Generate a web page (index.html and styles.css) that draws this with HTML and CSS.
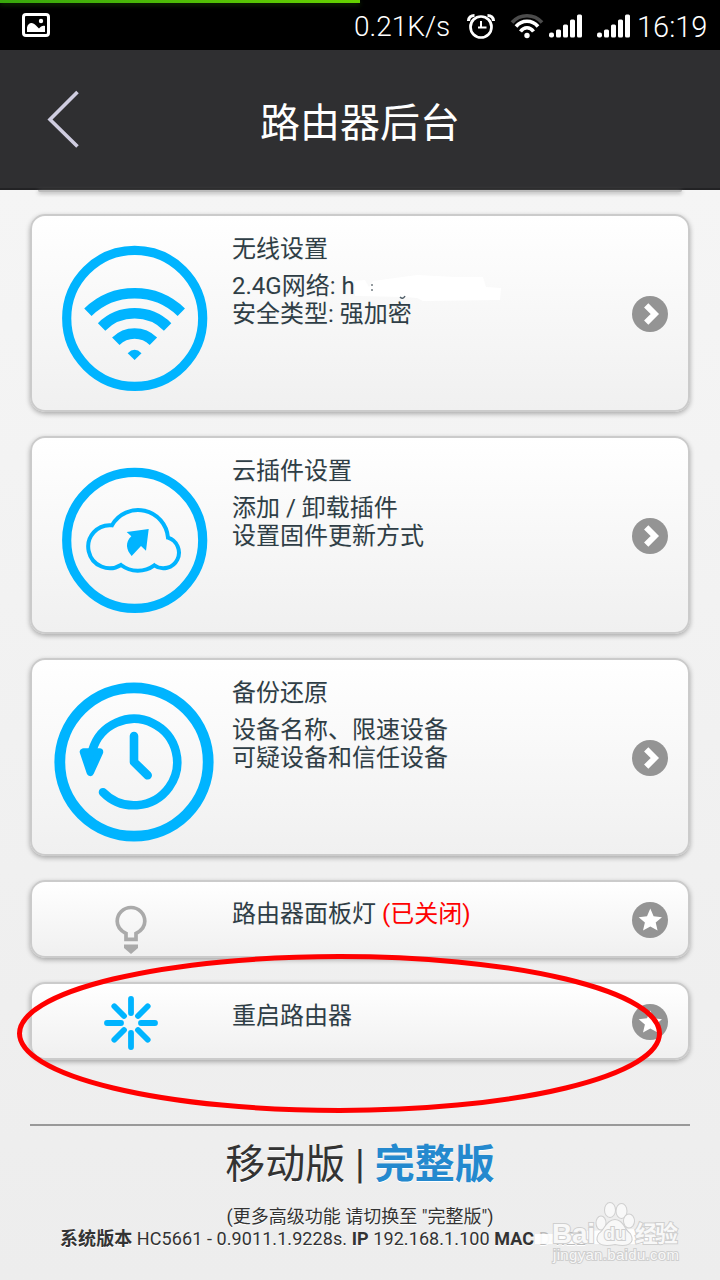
FILE: index.html
```html
<!DOCTYPE html>
<html lang="zh-CN">
<head>
<meta charset="utf-8">
<title>路由器后台</title>
<link rel="stylesheet" href="styles.css">
</head>
<body>
<svg class="defs" width="0" height="0">
  <symbol id="go" viewBox="0 0 36 36"><circle cx="18" cy="18" r="18" fill="#949494"/><path d="M14.2 9.3 22.8 18l-8.6 8.7" fill="none" stroke="#fff" stroke-width="6" stroke-linejoin="miter"/></symbol>
  <symbol id="star" viewBox="0 0 36 36"><circle cx="18" cy="18" r="18" fill="#949494"/><path d="M18.3 6.500 21.600 14.300 30 15.200 23.700 20.600 25.600 28.600 18.300 24.600 11 28.600 12.900 20.600 6.700 15.200 15 14.300Z" fill="#fff"/></symbol>
  <symbol id="signal" viewBox="0 0 34 24"><g fill="#fff"><rect x="0" y="18.500" width="5" height="5" rx="2"/><rect x="7" y="15.500" width="5" height="8" rx="1.500"/><rect x="14" y="10.500" width="5" height="13" rx="1.500"/><rect x="21" y="5.500" width="5" height="18" rx="1.500"/><rect x="28" y="0.500" width="5" height="23" rx="1.500"/></g></symbol>
</svg>
<div class="screen">
  <div class="progress"></div>
  <header class="status">
    <svg class="photo" width="28" height="24" viewBox="0 0 28 24"><rect x="1.500" y="1.500" width="25" height="21" rx="2.500" fill="none" stroke="#fff" stroke-width="3"/><path d="M5 19v-4.500C6 9 11 8.500 14 12.500l3 3c1.500-2 4-3.500 6-2.500v6Z" fill="#fff"/><circle cx="19" cy="8" r="2.200" fill="#fff"/></svg>
    <span class="speed">0.21K/s</span>
    <svg class="alarm" width="28" height="25" viewBox="0 0 28 25"><g fill="none" stroke="#fff" stroke-width="2.700"><circle cx="14" cy="13" r="10.500"/><path d="M14 7v6.500h5.500M11 13.500h3" stroke-width="2"/><path d="M1.500 7C1.500 3.500 4 1.500 7.500 1.500M26.500 7c0-3.500-2.500-5.500-6-5.500" stroke-width="3.200"/></g></svg>
    <svg class="wlan" width="32" height="25" viewBox="0 0 32 25"><g fill="none" stroke="#fff" stroke-width="3.600"><path d="M1 8.500C9-.5 23-.5 31 8.500" stroke="#4c4c4c"/><path d="M5 12.500C11 5.500 21 5.500 27 12.500"/><path d="M9.500 17.500C13 12.500 19 12.500 22.500 17.500"/></g><circle cx="16" cy="21.500" r="2.700" fill="#fff"/></svg>
    <svg class="bars" width="34" height="24"><use href="#signal"/></svg>
    <svg class="bars second" width="34" height="24"><use href="#signal"/></svg>
    <span class="clock">16:19</span>
  </header>
  <div class="titlebar">
    <svg class="back" width="32" height="58" viewBox="0 0 32 58"><path d="M30.500 2 3 29.500 30.500 56.500" fill="none" stroke="#cfcde0" stroke-width="3.600"/></svg>
    <h1>路由器后台</h1>
  </div>
  <main>
    <div class="previous"></div>
    <section class="card">
      <svg class="picture" width="160" height="160"><g fill="none" stroke="#00b4ff"><circle cx="80.700" cy="80.300" r="68" stroke-width="9.200"/><g stroke-width="10.500"><path d="M33.900 74.200A67 67 0 0 1 127.300 74.200"/><path d="M47.600 88.900A47 47 0 0 1 113.600 88.900"/><path d="M61.800 103.200A26.600 26.600 0 0 1 99.400 103.200"/></g></g><path d="M73.700 115.200Q80.600 108.500 87.500 115.200L80.600 122Z" fill="#00b4ff"/></svg>
      <div class="copy"><h2>无线设置</h2><p>2.4G网络: h<span class="mask"><svg width="146" height="30"><path d="M0 7 10 6 14 13 18 7 62 1 100 3 128 3 131 13 146 14 145 26 68 27 62 24 51 23 0 22Z" fill="#fff"/><path d="M17 10v2M17 15v2" stroke="#5d686e" stroke-width="1.300"/><path d="M45 23q3 3 5-1" fill="none" stroke="#52606a" stroke-width="1.500"/></svg></span><br>安全类型: 强加密</p></div>
      <svg class="action" width="36" height="36"><use href="#go"/></svg>
    </section>
    <section class="card">
      <svg class="picture" width="160" height="160"><g fill="none" stroke="#00b4ff"><circle cx="80.700" cy="80.300" r="68" stroke-width="9.200"/><path d="M58 65.300A30 30 0 0 1 114 77.700A15.600 15.600 0 1 1 100.300 105.300A28 28 0 0 1 67 105A21.500 21.500 0 1 1 58 65.300Z" stroke-width="4"/></g><path d="M94.700 69 72.700 72l4.600 4.300C71 82 72 90 77.700 96L87 86l5 4.700Z" fill="#00b4ff"/></svg>
      <div class="copy"><h2>云插件设置</h2><p>添加 / 卸载插件<br>设置固件更新方式</p></div>
      <svg class="action" width="36" height="36"><use href="#go"/></svg>
    </section>
    <section class="card">
      <svg class="picture" width="160" height="160"><g fill="none" stroke="#00b4ff" stroke-linecap="round" stroke-linejoin="round"><circle cx="80" cy="80" r="74.200" stroke-width="10.800"/><path d="M49 110.200A43.200 43.200 0 1 0 38.500 68M80 54v26l13.700 13.300" stroke-width="8.600"/><path d="M29.500 70h16L36.300 90.300Z" fill="#00b4ff" stroke-width="7.500"/></g></svg>
      <div class="copy"><h2>备份还原</h2><p>设备名称、限速设备<br>可疑设备和信任设备</p></div>
      <svg class="action" width="36" height="36"><use href="#go"/></svg>
    </section>
    <section class="card short">
      <svg class="picture" width="54" height="62"><g fill="none" stroke="#aaa" stroke-width="3.700"><path d="M22 45.300V39.500C16 36.500 13.200 32 13.200 27.300A13.800 13.800 0 0 1 40.800 27.300C40.800 32 38 36.500 32 39.500v5.800Z"/></g><path d="M20 50.500h14v3.500l-7 6-7-6Z" fill="#aaa"/></svg>
      <div class="copy"><h2>路由器面板灯 <em>(已关闭)</em></h2></div>
      <svg class="action" width="36" height="36"><use href="#star"/></svg>
    </section>
    <section class="card short">
      <svg class="picture" width="54" height="54"><path d="M27 3v14M27 37v14M3 27h14M37 27h14M10.300 10.300l9.700 9.700M34 34l9.700 9.700M43.700 10.300 34 20M20 34l-9.700 9.700" fill="none" stroke="#00b4ff" stroke-width="5.800" stroke-linecap="round"/></svg>
      <div class="copy"><h2>重启路由器</h2></div>
      <svg class="action" width="36" height="36"><use href="#star"/></svg>
    </section>
    <footer>
      <div class="versions">移动版 | <b>完整版</b></div>
      <div class="hint">(更多高级功能 请切换至 "完整版")</div>
      <div class="system"><b>系统版本</b> HC5661 - 0.9011.1.9228s. <b>IP</b> 192.168.1.100 <b>MAC</b> <span class="address">D4:EE</span></div>
    </footer>
  </main>
  <svg class="marker" width="650" height="164"><ellipse cx="324.500" cy="81.500" rx="320" ry="77" fill="none" stroke="#f00" stroke-width="5"/></svg>
  <svg class="watermark" width="150" height="70">
    <path d="M0 33H45L52 30 100 28 130 34V43H0Z" fill="#fff" opacity=".9"/>
    <g fill="#f8f8f8" stroke="#cfcfcf" stroke-width="2" paint-order="stroke">
      <text class="brand" x="17" y="42" textLength="43">Bai</text>
      <ellipse cx="66" cy="22" rx="4.500" ry="6.500"/><ellipse cx="75" cy="9" rx="5" ry="7"/><ellipse cx="86.500" cy="10" rx="5" ry="7"/><ellipse cx="94" cy="20" rx="5" ry="6.500"/>
      <path d="M80 19C72 19 70 29 64 33 59 42 67 46 80 43 93 46 100 42 95 33 89 29 88 19 80 19Z"/>
      <text class="paw" x="69" y="39" textLength="22">du</text>
      <text class="brand cjk" x="100" y="41" textLength="43">经验</text>
      <text class="domain" x="18" y="59" textLength="126">jingyan.baidu.com</text>
    </g>
  </svg>
</div>
</body>
</html>
```

FILE: styles.css
```css
* { box-sizing: border-box; }
body { margin: 0; font-family: Roboto, "Noto Sans CJK SC", sans-serif; color: #333; }
h1, h2, p { margin: 0; font-weight: 400; }
svg { display: block; flex: none; overflow: visible; }
.defs { position: absolute; }
.screen { position: relative; width: 720px; height: 1280px; overflow: hidden; background: linear-gradient(#f5f5f5 190px, #ededed); }
.progress { position: absolute; left: 0; top: 0; width: 360px; height: 3px; background: linear-gradient(90deg, #38a80c, #66d300); box-shadow: 0 2px 5px #123800; z-index: 1; }
.status { display: flex; height: 50px; background: #000; color: #fff; padding: 0 12px 0 22px; }
.status .photo { margin-top: 13px; }
.speed { width: 97px; margin-left: 304px; font-size: 28px; font-weight: 300; line-height: 53px; white-space: nowrap; }
.alarm { margin: 14px 0 0 16px; }
.wlan { margin: 14px 0 0 16px; }
.bars { margin: 14px 0 0 6px; }
.bars.second { margin-left: 14px; }
.clock { margin-left: 6px; font-size: 29px; font-weight: 300; line-height: 55px; white-space: nowrap; }
.titlebar { display: flex; height: 140px; padding-left: 47px; background: #2f2f31; border-bottom: 2px solid #222224; color: #fff; }
.back { margin-top: 40px; }
h1 { margin-left: 181px; font-size: 40px; line-height: 147px; }
main { display: flex; flex-direction: column; gap: 24px; padding: 0 30px; }
.previous { height: 2px; margin: 0 8px -2px; box-shadow: 0 1px 4px #888; background: #bbb; border-radius: 0 0 8px 8px; }
.card { display: flex; height: 198px; padding: 22px 20px 0 22px; border: 2px solid #cbcbcb; border-radius: 15px; background: linear-gradient(#fff, #f0f0f0); box-shadow: 0 2px 5px rgba(0,0,0,.3); color: #2f3e46; text-shadow: 0 1px 0 #f3f3f3; }
.copy { flex: 1; margin: -5px 0 0 18px; font-size: 24px; line-height: 28px; white-space: nowrap; }
h2 { font-size: 24px; line-height: 32px; }
.copy p { margin-top: 7px; }
.mask { display: inline-block; position: relative; width: 0; height: 0; }
.mask svg { position: absolute; left: 0; top: -20px; }
.action { margin-top: 58px; }
.short { height: 78px; padding: 12px 20px 0 72px; }
.short .copy { margin: 6px 0 0 74px; }
.short h2 { line-height: 28px; }
.short .action { margin-top: 8px; }
em { color: #f00; font-style: normal; }
footer { margin-top: 40px; border-top: 2px solid #999; text-shadow: 0 1px 0 #fff; white-space: nowrap; text-align: center; }
.versions { font-size: 40px; line-height: 78px; }
.hint { margin-top: -1px; font-size: 18px; line-height: 28px; }
.versions b { color: #2489ce; }
.system { padding-left: 30px; text-align: left; font-size: 18px; line-height: 16px; letter-spacing: .08px; }
.address { color: #bbb; }
.marker { position: absolute; left: 15px; top: 952px; }
.watermark { position: absolute; left: 535px; top: 1201px; }
.brand { font: 700 28px "Liberation Sans", sans-serif; }
.cjk { font: 700 23px "Noto Sans CJK SC", sans-serif; }
.paw { font: 700 18px "Liberation Sans", sans-serif; }
.domain { font: 15px "Liberation Sans", sans-serif; }
```
